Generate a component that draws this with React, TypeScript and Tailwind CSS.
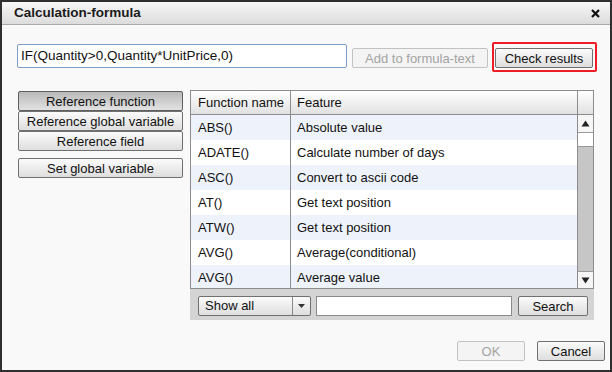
import React from "react";

type Fn = { name: string; feature: string };

const functions: Fn[] = [
  { name: "ABS()", feature: "Absolute value" },
  { name: "ADATE()", feature: "Calculate number of days" },
  { name: "ASC()", feature: "Convert to ascii code" },
  { name: "AT()", feature: "Get text position" },
  { name: "ATW()", feature: "Get text position" },
  { name: "AVG()", feature: "Average(conditional)" },
  { name: "AVG()", feature: "Average value" },
];

const btn =
  "flex items-center justify-center h-[20px] rounded-[2px] border border-[#707070] bg-gradient-to-b from-[#fbfbfb] to-[#dedede] text-[13px] leading-none text-[#111]";

const btnDisabled =
  "flex items-center justify-center h-[20px] rounded-[2px] border border-[#c2c2c2] bg-[#f4f4f4] text-[13px] leading-none text-[#a3a3a3]";

const SideButton = ({
  label,
  pressed,
  className = "",
}: {
  label: string;
  pressed?: boolean;
  className?: string;
}) => (
  <div
    className={
      pressed
        ? `flex items-center justify-center h-[20px] rounded-[2px] border border-[#5e5e5e] bg-gradient-to-b from-[#b9b9b9] to-[#e2e2e2] text-[13px] leading-none text-[#111] ${className}`
        : `${btn} ${className}`
    }
  >
    {label}
  </div>
);

const Triangle = ({ up }: { up?: boolean }) => (
  <svg width="9" height="7" viewBox="0 0 9 7">
    {up ? (
      <polygon points="4.5,0.5 8.5,6.5 0.5,6.5" fill="#222" />
    ) : (
      <polygon points="0.5,0.5 8.5,0.5 4.5,6.5" fill="#222" />
    )}
  </svg>
);

export default function App() {
  return (
    <div
      className="w-[612px] h-[372px] border-2 border-[#2f2f2f] bg-[#f8f9f8] flex flex-col overflow-hidden"
      style={{ fontFamily: '"Liberation Sans", Arial, sans-serif' }}
    >
      {/* title bar */}
      <div className="h-[23px] shrink-0 flex items-center justify-between border-b border-[#a9a9a9] bg-gradient-to-b from-[#f7f7f7] to-[#dcdcdc] pl-[12px] pr-[10px]">
        <span className="text-[13.5px] font-bold text-[#1a1a1a]">Calculation-formula</span>
        <svg width="9" height="9" viewBox="0 0 9 9">
          <path d="M1 1L8 8M8 1L1 8" stroke="#111" strokeWidth="2.2" />
        </svg>
      </div>

      {/* formula row */}
      <div className="flex items-start pl-[15px] mt-[17px]">
        <div className="mt-[2px] w-[330px] h-[24px] rounded-[2px] border border-[#7f9dc9] bg-white flex items-center pl-[3px] text-[13.5px] text-[#111]">
          IF(Quantity&gt;0,Quantity*UnitPrice,0)
        </div>
        <div className={`${btnDisabled} ml-[5px] mt-[6px] w-[136px]`}>Add to formula-text</div>
        <div className="ml-[4px] border-2 border-[#ee1c25] rounded-[2px] pt-[4px] pb-[2px] pl-[1px] pr-[2px]">
          <div className={`${btn} w-[98px]`}>Check results</div>
        </div>
      </div>

      {/* main area */}
      <div className="flex items-start pl-[16px] mt-[18px]">
        <div className="w-[165px] flex flex-col mt-[1px]">
          <SideButton label="Reference function" pressed />
          <SideButton label="Reference global variable" />
          <SideButton label="Reference field" />
          <SideButton label="Set global variable" className="mt-[7px]" />
        </div>

        <div className="ml-[7px] w-[404px] flex flex-col">
          <div className="h-[199px] border border-[#8c8c8c] bg-white flex flex-col overflow-hidden">
            {/* header */}
            <div className="h-[24px] shrink-0 flex border-b border-[#8c8c8c] bg-gradient-to-b from-[#ffffff] to-[#e1e1e1] text-[13px] text-[#111]">
              <div className="w-[100px] border-r border-[#8c8c8c] flex items-center pl-[7px]">Function name</div>
              <div className="flex-1 flex items-center pl-[6px]">Feature</div>
              <div className="w-[16px] border-l border-[#8c8c8c]" />
            </div>
            {/* body */}
            <div className="flex flex-1 min-h-0">
              <div className="flex-1 flex flex-col overflow-hidden">
                {functions.map((f, i) => (
                  <div
                    key={i}
                    className={`h-[25px] shrink-0 flex text-[13px] text-[#111] ${
                      i % 2 === 0 ? "bg-[#eef3fb]" : "bg-white"
                    }`}
                  >
                    <div className="w-[100px] border-r border-[#8c8c8c] flex items-center pl-[7px]">{f.name}</div>
                    <div className="flex-1 flex items-center pl-[6px]">{f.feature}</div>
                  </div>
                ))}
              </div>
              {/* scrollbar */}
              <div className="w-[16px] border-l border-[#8c8c8c] bg-[#c6c6c6] flex flex-col">
                <div className="h-[18px] bg-[#f6f6f6] border-b border-[#9a9a9a] flex items-center justify-center">
                  <Triangle up />
                </div>
                <div className="h-[14px] bg-white border-b border-[#9a9a9a]" />
                <div className="flex-1" />
                <div className="h-[17px] bg-[#f6f6f6] border-t border-[#9a9a9a] flex items-center justify-center">
                  <Triangle />
                </div>
              </div>
            </div>
          </div>

          {/* toolbar */}
          <div className="h-[31px] bg-[#d4d4d4] flex items-start pt-[7px] pl-[8px] pr-[6px]">
            <div className="w-[113px] h-[20px] rounded-[2px] border border-[#707070] bg-gradient-to-b from-[#fbfbfb] to-[#dedede] flex text-[13px] text-[#111]">
              <div className="flex-1 flex items-center pl-[6px]">Show all</div>
              <div className="w-[18px] border-l border-[#8a8a8a] flex items-center justify-center">
                <svg width="7" height="4" viewBox="0 0 7 4">
                  <polygon points="0,0 7,0 3.5,4" fill="#333" />
                </svg>
              </div>
            </div>
            <div className="ml-[5px] w-[196px] h-[20px] border border-[#8a8a8a] bg-white" />
            <div className={`${btn} ml-[6px] flex-1`}>Search</div>
          </div>
        </div>
      </div>

      {/* bottom buttons */}
      <div className="flex justify-end pr-[5px] mt-[21px]">
        <div className={`${btnDisabled} w-[68px]`}>OK</div>
        <div className={`${btn} w-[68px] ml-[12px]`}>Cancel</div>
      </div>
    </div>
  );
}
